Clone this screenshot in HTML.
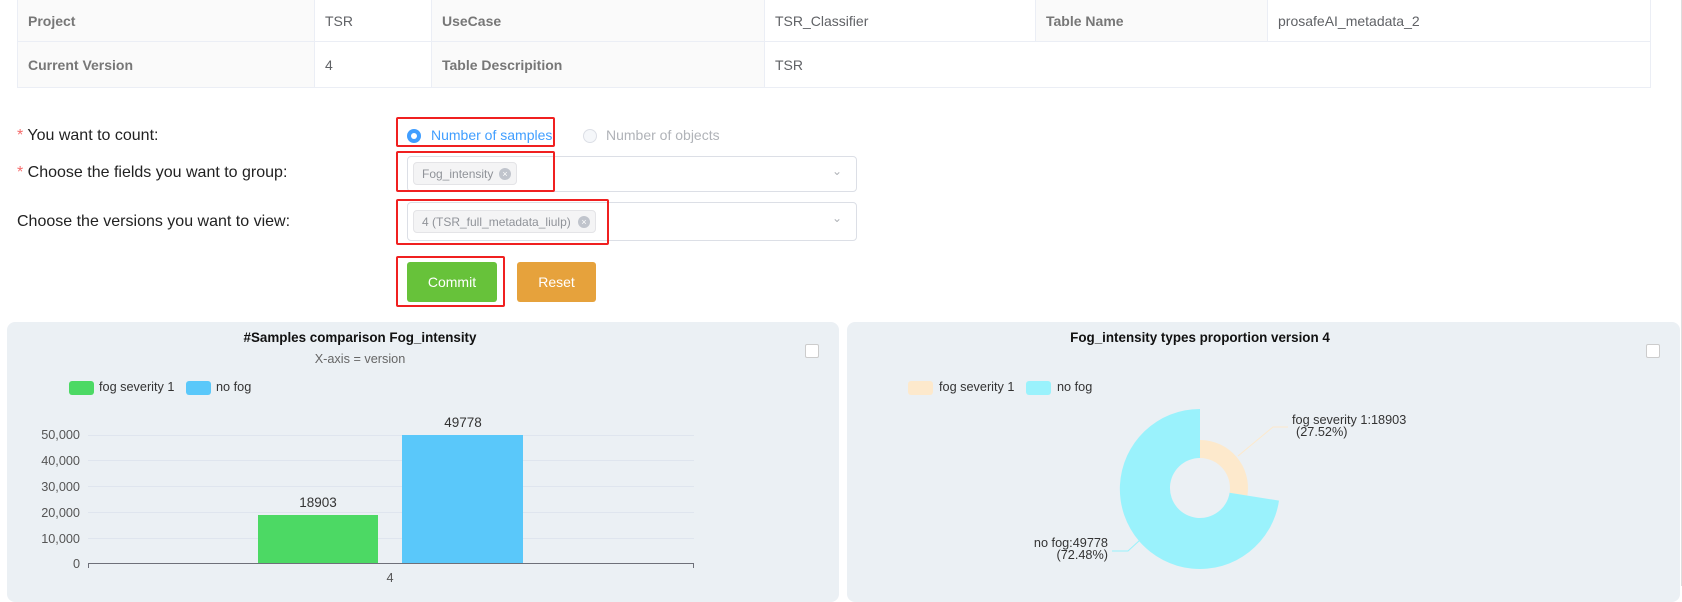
<!DOCTYPE html>
<html><head><meta charset="utf-8"><style>
*{box-sizing:border-box;margin:0;padding:0}
body{width:1682px;height:586px;overflow:hidden;background:#fff;font-family:"Liberation Sans",Arial,sans-serif;position:relative;color:#333}
.a{position:absolute}
table{position:absolute;left:17px;top:-1px;border-collapse:collapse;width:1634px}
td{border:1px solid #ebeef5;font-size:14px;color:#606266;padding:0 10px}
td.l{background:#fafafa;font-weight:bold;color:#777}
.lab{font-size:16px;color:#222;line-height:18px}
.req{color:#f56c6c}
.red{border:2px solid #f02020;border-radius:2px}
.sel{border:1px solid #dcdfe6;border-radius:4px;background:#fff}
.tag{background:#f4f4f5;border:1px solid #e4e4e7;border-radius:4px;font-size:12px;color:#909399;line-height:22px;padding-left:8px}
.x{position:absolute;right:5px;top:5px;width:12px;height:12px;border-radius:50%;background:#c0c4cc;color:#fff;font-size:9px;line-height:12px;text-align:center}
.btn{color:#fff;font-size:14px;text-align:center;border-radius:3px}
.panel{background:#ebf0f4;border-radius:8px}
.t{font-size:13.4px;font-weight:bold;color:#111}
.cb{background:#fff;border:1px solid #ccc;border-radius:2px;width:14px;height:14px}
.sm{font-size:12.7px;color:#333}
</style></head><body>
<table>
<tr style="height:42px"><td class="l" style="width:297px">Project</td><td style="width:117px">TSR</td><td class="l" style="width:333px">UseCase</td><td style="width:271px">TSR_Classifier</td><td class="l" style="width:232px">Table Name</td><td>prosafeAI_metadata_2</td></tr>
<tr style="height:46px"><td class="l">Current Version</td><td>4</td><td class="l">Table Descripition</td><td colspan="3">TSR</td></tr>
</table>

<div class="a lab" style="left:17px;top:127px"><span class="req">* </span>You want to count:</div>
<div class="a lab" style="left:17px;top:164px"><span class="req">* </span>Choose the fields you want to group:</div>
<div class="a lab" style="left:17px;top:213px">Choose the versions you want to view:</div>

<div class="a red" style="left:396px;top:117px;width:159px;height:30px"></div>
<div class="a" style="left:407px;top:129px;width:14px;height:14px;border-radius:50%;background:#409eff"><div class="a" style="left:4px;top:4px;width:6px;height:6px;border-radius:50%;background:#fff"></div></div>
<div class="a" style="left:431px;top:127px;font-size:14px;color:#409eff">Number of samples</div>
<div class="a" style="left:583px;top:129px;width:14px;height:14px;border-radius:50%;border:1px solid #dcdfe6;background:#f5f7fa"></div>
<div class="a" style="left:606px;top:127px;font-size:14px;color:#b0b3b8">Number of objects</div>

<div class="a sel" style="left:407px;top:156px;width:450px;height:36px"></div>
<div class="a" style="left:832px;top:164px;color:#b0b3b8;font-size:12px">&#8964;</div>
<div class="a tag" style="left:413px;top:162px;width:104px;height:23px">Fog_intensity<span class="x">×</span></div>
<div class="a red" style="left:396px;top:151px;width:159px;height:41px"></div>

<div class="a sel" style="left:407px;top:202px;width:450px;height:39px"></div>
<div class="a" style="left:832px;top:211px;color:#b0b3b8;font-size:12px">&#8964;</div>
<div class="a tag" style="left:413px;top:210px;width:183px;height:23px">4 (TSR_full_metadata_liulp)<span class="x">×</span></div>
<div class="a red" style="left:396px;top:199px;width:213px;height:46px"></div>

<div class="a btn" style="left:407px;top:262px;width:90px;height:40px;line-height:40px;background:#67c23a">Commit</div>
<div class="a red" style="left:396px;top:256px;width:109px;height:51px"></div>
<div class="a btn" style="left:517px;top:262px;width:79px;height:40px;line-height:40px;background:#e6a23c">Reset</div>

<div class="a panel" style="left:7px;top:322px;width:832px;height:280px"></div>
<div class="a t" style="left:0;width:720px;text-align:center;top:330px">#Samples comparison Fog_intensity</div>
<div class="a" style="left:0;width:720px;text-align:center;top:352px;font-size:12.7px;color:#666">X-axis = version</div>
<div class="a cb" style="left:805px;top:344px"></div>
<div class="a" style="left:69px;top:381px;width:25px;height:14px;border-radius:3px;background:#4cd964"></div>
<div class="a sm" style="left:99px;top:380px">fog severity 1</div>
<div class="a" style="left:186px;top:381px;width:25px;height:14px;border-radius:3px;background:#5ac8fa"></div>
<div class="a sm" style="left:216px;top:380px">no fog</div>
<svg class="a" style="left:0;top:0" width="840" height="586">
<g stroke="#dfe5ee" stroke-width="1">
<line x1="88" y1="435.5" x2="694" y2="435.5"/><line x1="88" y1="460.5" x2="694" y2="460.5"/><line x1="88" y1="486.5" x2="694" y2="486.5"/><line x1="88" y1="512.5" x2="694" y2="512.5"/><line x1="88" y1="538.5" x2="694" y2="538.5"/></g>
<rect x="258" y="515" width="120" height="48" fill="#4cd964"/>
<rect x="402" y="435" width="121" height="128" fill="#5ac8fa"/>
<line x1="88" y1="563.5" x2="694" y2="563.5" stroke="#6e7079"/>
<line x1="88.5" y1="563" x2="88.5" y2="568" stroke="#6e7079"/><line x1="693.5" y1="563" x2="693.5" y2="568" stroke="#6e7079"/>
<g font-family="Liberation Sans,Arial,sans-serif" font-size="12.7" fill="#555" text-anchor="end">
<text x="80" y="439">50,000</text><text x="80" y="465">40,000</text><text x="80" y="491">30,000</text><text x="80" y="517">20,000</text><text x="80" y="543">10,000</text><text x="80" y="568">0</text></g>
<g font-family="Liberation Sans,Arial,sans-serif" font-size="13.5" fill="#333" text-anchor="middle">
<text x="318" y="507">18903</text><text x="463" y="427">49778</text><text x="390" y="582" font-size="12.7" fill="#555">4</text></g>
</svg>

<div class="a panel" style="left:847px;top:322px;width:833px;height:280px"></div>
<div class="a t" style="left:900px;width:600px;text-align:center;top:330px">Fog_intensity types proportion version 4</div>
<div class="a cb" style="left:1646px;top:344px"></div>
<div class="a" style="left:908px;top:381px;width:25px;height:14px;border-radius:3px;background:#fde9cc"></div>
<div class="a sm" style="left:939px;top:380px">fog severity 1</div>
<div class="a" style="left:1026px;top:381px;width:25px;height:14px;border-radius:3px;background:#9af2fc"></div>
<div class="a sm" style="left:1057px;top:380px">no fog</div>
<svg class="a" style="left:0;top:0" width="1682" height="586">
<path d="M1200 440 A48 48 0 0 1 1247.4 495.6 L1229.6 492.7 A30 30 0 0 0 1200 458 Z" fill="#fde9cc"/>
<path d="M1279 500.6 A80 80 0 1 1 1200 409 L1200 458 A30 30 0 1 0 1229.6 492.7 Z" fill="#9af2fc"/>
<polyline points="1238,456 1273,427 1288,427" fill="none" stroke="#fde9cc"/>
<polyline points="1140,540 1128,551 1112,551" fill="none" stroke="#9af2fc"/>
<g font-family="Liberation Sans,Arial,sans-serif" font-size="12.7" fill="#333">
<text x="1292" y="424">fog severity 1:18903</text><text x="1296" y="436">(27.52%)</text>
<text x="1108" y="547" text-anchor="end">no fog:49778</text><text x="1108" y="559" text-anchor="end">(72.48%)</text></g>
<line x1="1681.5" y1="0" x2="1681.5" y2="586" stroke="#ddd"/>
</svg>
</body></html>
